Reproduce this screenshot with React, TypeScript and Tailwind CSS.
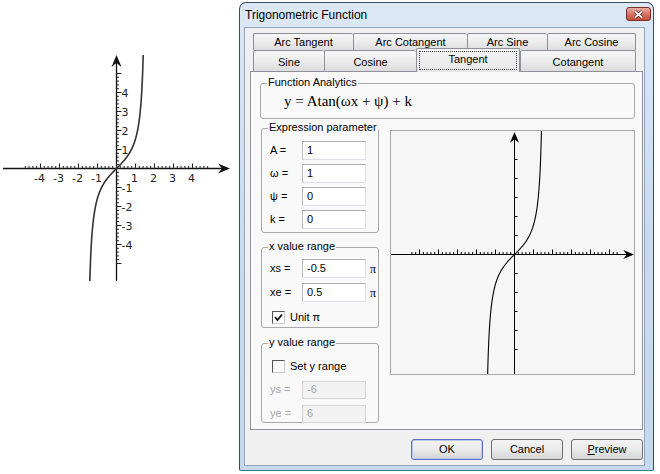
import React from "react";

const UI = "font-['Liberation_Sans',Arial,sans-serif]";

// y = tan(x) sampled between the points where it leaves [yMin, yMax]
function tanPath(ox: number, oy: number, unit: number, yMin: number, yMax: number) {
  const x0 = -Math.atan((yMax - oy) / unit);
  const x1 = Math.atan((oy - yMin) / unit);
  const pts: string[] = [];
  const steps = 240;
  for (let i = 0; i <= steps; i++) {
    const x = x0 + ((x1 - x0) * i) / steps;
    const px = ox + x * unit;
    const py = oy - Math.tan(x) * unit;
    pts.push(`${i === 0 ? "M" : "L"}${px.toFixed(2)} ${py.toFixed(2)}`);
  }
  return pts.join(" ");
}

function arrowRight(tx: number, ty: number, s = 1) {
  return `M${tx} ${ty} L${tx - 12 * s} ${ty - 5 * s} L${tx - 8 * s} ${ty} L${tx - 12 * s} ${ty + 5 * s} Z`;
}

function arrowUp(tx: number, ty: number, s = 1) {
  return `M${tx} ${ty} L${tx - 5 * s} ${ty + 12 * s} L${tx} ${ty + 8 * s} L${tx + 5 * s} ${ty + 12 * s} Z`;
}

function SideGraph() {
  const ox = 116.5;
  const oy = 168.5;
  const u = 19;
  const xt = [];
  for (let k = -24; k <= 24; k++) {
    const x = ox + k * 3.8;
    const h = k % 5 === 0 ? 5 : 2.5;
    xt.push(<line key={k} x1={x} x2={x} y1={oy} y2={oy - h} stroke="#222" strokeWidth={1} />);
  }
  const yt = [];
  for (let k = -25; k <= 25; k++) {
    const y = oy + k * 3.8;
    const h = k % 5 === 0 ? 5 : 2.5;
    yt.push(<line key={k} x1={ox} x2={ox + h} y1={y} y2={y} stroke="#222" strokeWidth={1} />);
  }
  const nums = [-4, -3, -2, -1, 1, 2, 3, 4];
  return (
    <svg width={239} height={474} className="shrink-0" style={{ fontFamily: "'DejaVu Sans', sans-serif" }}>
      <line x1={3} x2={225} y1={oy} y2={oy} stroke="#111" strokeWidth={1.3} />
      <line x1={ox} x2={ox} y1={281} y2={60} stroke="#111" strokeWidth={1.3} />
      <path d={arrowRight(230, oy)} fill="#111" />
      <path d={arrowUp(ox, 55)} fill="#111" />
      {xt}
      {yt}
      {nums.map((n) => (
        <text key={"x" + n} x={ox + n * u - 1} y={182} fontSize={11} textAnchor="middle" fill="#222">
          {n}
        </text>
      ))}
      {nums.map((n) => (
        <text key={"y" + n} x={ox + 5} y={oy - n * u + 4} fontSize={11} fill="#222">
          {n}
        </text>
      ))}
      <path d={tanPath(ox, oy, u, 55, 281)} fill="none" stroke="#333" strokeWidth={1.6} />
    </svg>
  );
}

function PlotBox() {
  const ox = 123.5;
  const oy = 123.5;
  const u = 19;
  const xt = [];
  for (let k = -27; k <= 27; k++) {
    const x = ox + k * 3.8;
    const h = k % 5 === 0 ? 5 : 2.5;
    xt.push(<line key={k} x1={x} x2={x} y1={oy} y2={oy - h} stroke="#000" strokeWidth={1} />);
  }
  const yt = [];
  for (let k = -5; k <= 5; k++) {
    if (k === 0) continue;
    const y = oy + k * u;
    yt.push(<line key={k} x1={ox} x2={ox + 3} y1={y} y2={y} stroke="#000" strokeWidth={1} />);
  }
  return (
    <div className="ml-[11px] mt-[2px] h-[245px] w-[245px] shrink-0 border border-[#a7a7a7] bg-[#f6f6f6]">
      <svg width={243} height={243} className="block">
        <line x1={0} x2={238} y1={oy} y2={oy} stroke="#000" strokeWidth={1} />
        <line x1={ox} x2={ox} y1={243} y2={6} stroke="#000" strokeWidth={1} />
        <path d={arrowRight(243, oy, 0.9)} fill="#000" />
        <path d={arrowUp(ox, 1, 0.9)} fill="#000" />
        {xt}
        {yt}
        <path d={tanPath(ox, oy, u, -1, 244)} fill="none" stroke="#000" strokeWidth={1.1} />
      </svg>
    </div>
  );
}

function Group({
  label,
  className,
  children,
}: {
  label: string;
  className: string;
  children?: React.ReactNode;
}) {
  return (
    <div className={"relative rounded-[3px] border border-[#a9a9a9] " + className}>
      <span className="absolute left-[6px] top-[-8px] bg-[#f9f9f9] px-[1px] text-[11px] leading-[13px] text-black">
        {label}
      </span>
      {children}
    </div>
  );
}

function Field({
  label,
  value,
  disabled,
  suffix,
  h = 19,
}: {
  label: string;
  value: string;
  disabled?: boolean;
  suffix?: boolean;
  h?: number;
}) {
  return (
    <div className="flex items-center">
      <span className={"w-[32px] text-[11px] " + (disabled ? "text-[#a8a8a8]" : "text-black")}>{label}</span>
      <div
        className={
          "flex w-[64px] items-center border pl-[4px] text-[11px] " +
          (disabled
            ? "border-[#d3d3d3] bg-[#f2f2f2] text-[#a0a0a0]"
            : "border-[#dde1e7] border-t-[#abadb3] border-l-[#b7bac0] bg-white text-black")
        }
        style={{ height: h }}
      >
        {value}
      </div>
      {suffix && <span className="ml-[4px] font-['Liberation_Serif',serif] text-[12px] text-black">π</span>}
    </div>
  );
}

function Check({ checked, label }: { checked?: boolean; label: string }) {
  return (
    <div className="flex items-center gap-[5px]">
      <div className="flex h-[13px] w-[13px] items-center justify-center border border-[#555] border-b-[#c8c8c8] border-r-[#c8c8c8] bg-white">
        {checked && (
          <svg width={9} height={9} viewBox="0 0 9 9">
            <path d="M1 4 L3.5 7 L8 1.5" fill="none" stroke="#111" strokeWidth={1.8} />
          </svg>
        )}
      </div>
      <span className="text-[11px] text-black">{label}</span>
    </div>
  );
}

const tabBase =
  "flex items-center justify-center border-t border-l border-[#8d9097] rounded-t-[2px] bg-gradient-to-b from-[#f7f7f7] via-[#ececec] to-[#dcdcdc] text-[11px] text-black";

function Tabs() {
  const top = [
    ["Arc Tangent", 100],
    ["Arc Cotangent", 114],
    ["Arc Sine", 80],
    ["Arc Cosine", 89],
  ] as const;
  return (
    <div className="ml-[3px] w-[383px]">
      <div className="flex h-[17px]">
        {top.map(([t, w], i) => (
          <div key={t} className={tabBase + (i === top.length - 1 ? " border-r" : "")} style={{ width: w }}>
            {t}
          </div>
        ))}
      </div>
      <div className="flex h-[21px] items-end">
        <div className={tabBase + " h-[21px] w-[71px] pt-[2px]"}>Sine</div>
        <div className={tabBase + " h-[21px] w-[92px] pt-[2px]"}>Cosine</div>
        <div className="relative z-10 -mb-px h-[24px] w-[104px] rounded-t-[2px] border border-b-0 border-[#8d9097] bg-gradient-to-b from-[#f4f4f4] to-[#e6e6e6] p-[2px] text-[11px] text-black">
          <div className="flex h-full items-start justify-center border border-dotted border-[#444] pt-[1px] leading-[13px]">
            Tangent
          </div>
        </div>
        <div className={tabBase + " h-[21px] w-[116px] border-r pt-[2px]"}>Cotangent</div>
      </div>
    </div>
  );
}

function Btn({ children, primary }: { children: React.ReactNode; primary?: boolean }) {
  return (
    <div
      className={
        "flex h-[21px] w-[72px] items-center justify-center rounded-[3px] border bg-gradient-to-b from-[#f3f3f3] via-[#ebebeb] to-[#d4d4d4] text-[11px] text-black " +
        (primary ? "border-[#5b6fc4] shadow-[inset_0_0_0_1px_#b9c8f2]" : "border-[#707070]")
      }
    >
      {children}
    </div>
  );
}

function Dialog() {
  return (
    <div className={"mt-[2px] flex h-[469px] w-[415px] shrink-0 flex-col rounded-t-[7px] rounded-b-[2px] border border-[#3a4d60] border-b-[#3c7a84] bg-gradient-to-b from-[#dce8f6] via-[#c9daef] to-[#c6d8ee] " + UI}>
      <div className="flex h-[24px] items-center justify-between pl-[5px] pr-[2px]">
        <span className="text-[12px] text-black">Trigonometric Function</span>
        <div className="mt-[-2px] flex h-[14px] w-[25px] items-center justify-center rounded-[3px] border border-[#7a3027] bg-gradient-to-b from-[#eab0a5] via-[#d87565] to-[#c44f3d]">
          <svg width={11} height={9} viewBox="0 0 11 9">
            <path d="M2 1.5 L9 7.5 M9 1.5 L2 7.5" stroke="#5e1d15" strokeWidth={3.4} />
            <path d="M2 1.5 L9 7.5 M9 1.5 L2 7.5" stroke="#fff" strokeWidth={1.8} />
          </svg>
        </div>
      </div>
      <div className="ml-[4px] mr-[8px] h-[439px] border border-[#8fa6bd] bg-[#f0f0f0]">
        <div className="pl-[5px] pt-[5px]">
          <Tabs />
          <div className="h-[359px] w-[393px] border border-[#8d9097] bg-[#f9f9f9]">
            <Group label="Function Analytics" className="ml-[9px] mt-[11px] h-[36px] w-[375px]">
              <div className="flex h-full items-center pl-[23px] font-['Liberation_Serif',serif] text-[15px] text-black">
                y = Atan(ωx + ψ) + k
              </div>
            </Group>
            <div className="mt-[9px] flex">
              <div className="ml-[10px] w-[118px]">
                <Group label="Expression parameter" className="h-[105px]">
                  <div className="flex flex-col gap-[4px] pl-[8px] pt-[12px]">
                    <Field label="A =" value="1" />
                    <Field label="ω =" value="1" />
                    <Field label="ψ =" value="0" />
                    <Field label="k =" value="0" />
                  </div>
                </Group>
                <Group label="x value range" className="mt-[14px] h-[81px]">
                  <div className="flex flex-col gap-[5px] pl-[8px] pt-[11px]">
                    <Field label="xs =" value="-0.5" suffix />
                    <Field label="xe =" value="0.5" suffix />
                  </div>
                  <div className="mt-[7px] pl-[10px]">
                    <Check checked label="Unit π" />
                  </div>
                </Group>
                <Group label="y value range" className="mt-[15px] h-[80px]">
                  <div className="pl-[10px] pt-[14px]">
                    <Check label="Set y range" />
                  </div>
                  <div className="mt-[6px] flex flex-col gap-[6px] pl-[8px]">
                    <Field label="ys =" value="-6" disabled h={18} />
                    <Field label="ye =" value="6" disabled h={18} />
                  </div>
                </Group>
              </div>
              <PlotBox />
            </div>
          </div>
          <div className="mt-[9px] flex w-[393px] justify-end gap-[8px]">
            <Btn primary>OK</Btn>
            <Btn>Cancel</Btn>
            <Btn>
              <span className="underline">P</span>review
            </Btn>
          </div>
        </div>
      </div>
    </div>
  );
}

export default function App() {
  return (
    <div className="flex h-[474px] w-[660px] overflow-hidden bg-white">
      <SideGraph />
      <Dialog />
    </div>
  );
}
